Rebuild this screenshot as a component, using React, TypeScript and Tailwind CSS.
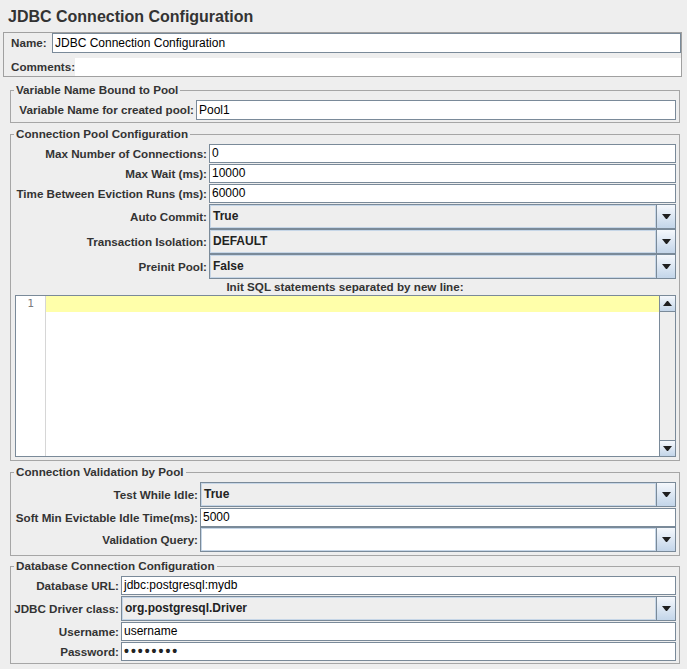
import React from "react";

const label = "flex items-center justify-end whitespace-nowrap text-[11.65px] font-bold text-[#333333]";

function Arrow({ up = false }: { up?: boolean }) {
  return (
    <svg width="9" height="5" viewBox="0 0 9 5" className={up ? "rotate-180" : ""}>
      <path d="M0 0H9L5 5H4Z" fill="#1f1f1f" />
    </svg>
  );
}

function TextField({ value, className = "" }: { value: string; className?: string }) {
  return (
    <div
      className={`h-[19px] overflow-hidden whitespace-nowrap border border-[#7a8a99] bg-white pl-[2px] text-[12px] leading-[17px] text-black ${className}`}
    >
      {value}
    </div>
  );
}

function Combo({ value, editable = false, className = "" }: { value: string; editable?: boolean; className?: string }) {
  return (
    <div className={`flex h-[25px] border border-[#7a8a99] ${className}`}>
      <div
        className={`flex-1 border border-[#c6d6e7] pl-[2px] text-[12px] font-bold leading-[21px] text-[#222222] ${
          editable ? "bg-white" : "bg-[#eeeeee]"
        }`}
      >
        {value}
      </div>
      <div className="flex w-[19px] items-center justify-center border-l border-[#7a8a99] bg-linear-to-b from-[#f5f8fc] to-[#c3d5e9]">
        <Arrow />
      </div>
    </div>
  );
}

function Section({ title, className = "", children }: { title: string; className?: string; children: React.ReactNode }) {
  return (
    <fieldset className={`ml-[10px] w-[670px] border border-[#a6a6a6] pl-[3px] pr-[3px] ${className}`}>
      <legend className="px-[2px] text-[11.65px] font-bold leading-[14px] text-[#333333]">{title}</legend>
      {children}
    </fieldset>
  );
}

function SqlEditor() {
  return (
    <div className="col-span-2 ml-[1px] flex h-[162px] border border-[#7a8a99] bg-white">
      <div className="w-[30px] border-r border-[#d6d6d6] pt-[1px] text-center font-['DejaVu_Sans_Mono',monospace] text-[11px] leading-[14px] text-[#7d7d7d]">
        1
      </div>
      <div className="flex-1">
        <div className="h-[16px] bg-[#ffffaa]" />
      </div>
      <div className="flex w-[16px] flex-col border-l border-[#7a8a99] bg-[#eeeeee]">
        <div className="flex h-[16px] items-center justify-center border-b border-[#7a8a99] bg-linear-to-b from-[#f5f8fc] to-[#c3d5e9]">
          <Arrow up />
        </div>
        <div className="flex-1" />
        <div className="flex h-[16px] items-center justify-center border-t border-[#7a8a99] bg-linear-to-b from-[#f5f8fc] to-[#c3d5e9]">
          <Arrow />
        </div>
      </div>
    </div>
  );
}

export default function App() {
  return (
    <div className="h-[669px] w-[687px] overflow-hidden bg-[#eeeeee] font-['Liberation_Sans',Arial,sans-serif]">
      <div className="h-[32px] pl-[8px] pt-[8px] text-[16px] font-bold leading-[18px] text-[#333333]">
        JDBC Connection Configuration
      </div>

      <div className="ml-[3px] h-[45px] w-[679px] border border-[#a0a0a0]">
        <div className="flex h-[20px]">
          <div className="flex w-[48px] items-center pl-[7px] text-[11.65px] font-bold text-[#333333]">Name:</div>
          <TextField value="JDBC Connection Configuration" className="h-[20px] flex-1 leading-[18px]" />
        </div>
        <div className="mt-[5px] flex h-[18px]">
          <div className="flex w-[71px] items-center whitespace-nowrap pl-[7px] text-[11.65px] font-bold text-[#333333]">
            Comments:
          </div>
          <div className="flex-1 bg-white" />
        </div>
      </div>

      <Section title="Variable Name Bound to Pool" className="mt-[6px] pb-[2px]">
        <div className="grid grid-cols-[180px_1fr] gap-x-[2px] pt-[3px]">
          <div className={label}>Variable Name for created pool:</div>
          <TextField value="Pool1" className="h-[20px] leading-[18px]" />
        </div>
      </Section>

      <Section title="Connection Pool Configuration" className="mt-[4px] pb-[3px]">
        <div className="grid grid-cols-[193px_1fr] gap-x-[2px] pt-[3px]">
          <div className={`${label} mb-[1px]`}>Max Number of Connections:</div>
          <TextField value="0" className="mb-[1px]" />
          <div className={`${label} mb-[1px]`}>Max Wait (ms):</div>
          <TextField value="10000" className="mb-[1px]" />
          <div className={`${label} mb-[1px]`}>Time Between Eviction Runs (ms):</div>
          <TextField value="60000" className="mb-[1px]" />
          <div className={label}>Auto Commit:</div>
          <Combo value="True" />
          <div className={label}>Transaction Isolation:</div>
          <Combo value="DEFAULT" />
          <div className={label}>Preinit Pool:</div>
          <Combo value="False" />
          <div className="col-span-2 h-[16px] text-center text-[11.65px] font-bold leading-[16px] text-[#333333]">
            Init SQL statements separated by new line:
          </div>
          <SqlEditor />
        </div>
      </Section>

      <Section title="Connection Validation by Pool" className="mt-[4px] pb-[3px]">
        <div className="grid grid-cols-[184px_1fr] gap-x-[2px] pt-[3px]">
          <div className={label}>Test While Idle:</div>
          <Combo value="True" />
          <div className={`${label} mt-[1px]`}>Soft Min Evictable Idle Time(ms):</div>
          <TextField value="5000" className="mt-[1px]" />
          <div className={label}>Validation Query:</div>
          <Combo value="" editable />
        </div>
      </Section>

      <Section title="Database Connection Configuration" className="mt-[3px] pb-[2px]">
        <div className="grid grid-cols-[105px_1fr] gap-x-[2px] pt-[3px]">
          <div className={`${label} mb-[1px]`}>Database URL:</div>
          <TextField value="jdbc:postgresql:mydb" className="mb-[1px]" />
          <div className={label}>JDBC Driver class:</div>
          <Combo value="org.postgresql.Driver" />
          <div className={`${label} mt-[1px] mb-[1px]`}>Username:</div>
          <TextField value="username" className="mt-[1px] mb-[1px]" />
          <div className={label}>Password:</div>
          <div className="h-[19px] overflow-hidden whitespace-nowrap border border-[#7a8a99] bg-white pl-[2px] text-[14px] font-bold leading-[16px] tracking-[2px] text-[#222222]">
            ••••••••
          </div>
        </div>
      </Section>
    </div>
  );
}
